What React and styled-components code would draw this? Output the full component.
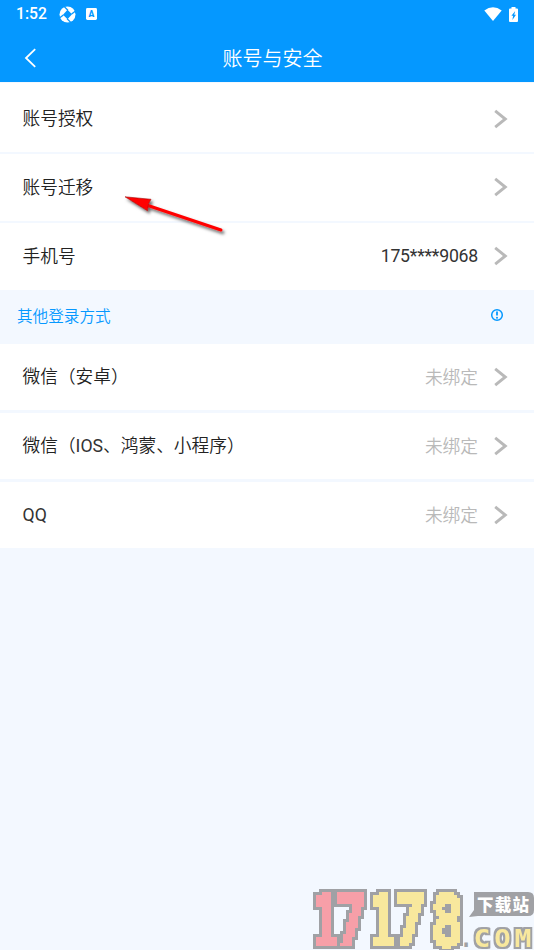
import React from 'react';
import styled, { createGlobalStyle } from 'styled-components';

const GlobalStyle = createGlobalStyle`
  * { box-sizing: border-box; }
  body { margin: 0; background: #f3f8ff; }
`;

const Screen = styled.main`
  position: relative;
  width: 534px;
  height: 950px;
  overflow: hidden;
  background: #f3f8ff;
  color: #222;
  font-family: Roboto, "Noto Sans CJK SC", sans-serif;
`;

const StatusBar = styled.div`
  display: flex;
  align-items: center;
  height: 28px;
  padding: 0 16px 0 16px;
  background: #0598ff;
  color: #fff;
`;

const Clock = styled.span`
  width: 43px;
  font-size: 15.7px;
  line-height: 28px;
  font-weight: 500;
`;

const StatusIcons = styled.div`
  display: flex;
  align-items: center;
  gap: ${(p) => p.$gap}px;
  margin-left: ${(p) => (p.$end ? 'auto' : '0')};
  height: ${(p) => (p.$end ? '26px' : '28px')};
`;

const Header = styled.header`
  display: grid;
  grid-template-columns: 60px 1fr 60px;
  align-items: center;
  height: 54px;
  padding-top: 6px;
  background: #0598ff;
  color: #fff;
  margin-bottom: 1px;
`;

const BackButton = styled.button`
  display: flex;
  padding: 0 0 0 24px;
  border: 0;
  background: none;
  color: inherit;
`;

const Title = styled.h1`
  margin: 0;
  padding: 1px 0 0 11px;
  text-align: center;
  font-size: 20px;
  line-height: 30px;
  font-weight: 350;
`;

const List = styled.section`
  display: grid;
  gap: 2.5px;
`;

const Row = styled.div`
  display: flex;
  align-items: center;
  height: ${(p) => p.$height || 66.5}px;
  padding: ${(p) => (p.$height ? '2.5px' : '0')} 26px 0 22.5px;
  background: #fff;
  font-size: 17.7px;
  line-height: 26px;
  font-weight: 350;
`;

const Label = styled.span`
  flex: 1;
  padding-top: ${(p) => (p.$latin ? 0 : 1.25)}px;
`;

const Latin = styled.span`
  color: #333;
  font-weight: 400;
`;

const Value = styled.span`
  margin-right: 16px;
  padding-top: 1.5px;
  color: ${(p) => (p.$muted ? '#b9b9b9' : '#333')};
`;

const Digits = styled(Value)`
  padding-top: 0;
  letter-spacing: -0.25px;
  font-weight: 400;
`;

const SectionHeader = styled.div`
  display: flex;
  align-items: center;
  justify-content: space-between;
  height: 54px;
  padding: 0 30px 3.5px 17px;
  color: #0598ff;
  font-size: 15.6px;
  font-weight: 350;
`;

const ArrowOverlay = styled.svg`
  position: absolute;
  left: 115px;
  top: 185px;
`;

const Watermark = styled.svg`
  position: absolute;
  left: 304px;
  top: 880px;
`;

const Chevron = () => (
  <svg width="14" height="20" viewBox="0 0 14 20" fill="none" stroke="#b9b9b9" strokeWidth="2.9">
    <path d="M1.2 1.9 11.3 10 1.2 18.1" strokeLinejoin="miter" />
  </svg>
);

const Item = ({ label, value, muted, height, latin }) => (
  <Row $height={height}>
    <Label $latin={latin}>{label}</Label>
    {value && (muted ? <Value $muted>{value}</Value> : <Digits>{value}</Digits>)}
    <Chevron />
  </Row>
);

const ShutterIcon = () => (
  <svg width="17" height="17" viewBox="0 0 17 17">
    <circle cx="8.5" cy="8.5" r="8" fill="#fff" />
    <path d="M8.5 3.8 13 8.3 8.5 13.2 4 8.7Z" fill="#0598ff" />
    <path d="M8.9 4.2 5 .4M12.6 8.1 16.6 5M8.1 12.8 12 16.6M4.4 8.9.4 12" stroke="#0598ff" strokeWidth="1.3" />
  </svg>
);

const KeyboardIcon = () => (
  <svg width="11" height="12" viewBox="0 0 11 12">
    <rect width="11" height="12" rx="1.4" fill="#fff" />
    <text x="5.5" y="9" textAnchor="middle" fontFamily="Roboto, sans-serif" fontSize="8.5" fontWeight="900" fill="#0598ff">A</text>
  </svg>
);

const WifiIcon = () => (
  <svg width="18" height="14" viewBox="0 0 18 14">
    <path d="M.3 3.5Q9-3 17.7 3.5L9 14Z" fill="#fff" />
  </svg>
);

const BatteryIcon = () => (
  <svg width="9" height="15" viewBox="0 0 9 15">
    <path d="M2.5 0h4v1.4H8q1 0 1 1V14q0 1-1 1H1q-1 0-1-1V2.4q0-1 1-1h1.5Z" fill="#fff" />
    <path d="M6.2 4 2.4 8.8h1.7L3.4 13 7 7.8H5.2Z" fill="#0598ff" />
  </svg>
);

const BackIcon = () => (
  <svg width="13" height="20" viewBox="0 0 13 20" fill="none" stroke="#fff" strokeWidth="1.8">
    <path d="M11.2 1.2 2 10l9.2 8.8" />
  </svg>
);

const InfoIcon = () => (
  <svg width="14" height="14" viewBox="0 0 14 14">
    <circle cx="7" cy="7" r="5.3" fill="none" stroke="#0598ff" strokeWidth="1.5" />
    <path d="M7 3.6v4" stroke="#0598ff" strokeWidth="1.8" />
    <circle cx="7" cy="9.7" r="1" fill="#0598ff" />
  </svg>
);

const PINK = '#f79fa8';
const YELLOW = '#f8e89d';
const GREY = '#a0a1a5';

const digits = [
  { text: '1', x: 10, width: 22, color: PINK },
  { text: '7', x: 33, width: 28, color: PINK },
  { text: '1', x: 68, width: 21, color: YELLOW },
  { text: '7', x: 91, width: 29, color: YELLOW },
  { text: '8', x: 128, width: 30, color: YELLOW },
];

const domain = [
  { text: '.', x: 160, width: 4 },
  { text: 'C', x: 171, width: 14 },
  { text: 'O', x: 191, width: 15 },
  { text: 'M', x: 211, width: 16 },
];

const glyphWidth = { 1: 0.50, 7: 0.53, 8: 0.56, '.': 0.19, C: 0.5, O: 0.55, M: 0.57 };

const LogoGlyph = ({ text, x, width, size, baseline, color }) => {
  const sx = width / (size * glyphWidth[text]);
  return (
    <text
      transform={`translate(${x + width / 2} ${baseline}) scale(${sx} 1)`}
      textAnchor="middle"
      fontFamily='"DejaVu Sans Mono", monospace'
      fontWeight="700"
      fontSize={size}
      fill={color}
    >
      {text}
    </text>
  );
};

/* Samples the lettering on a square grid and surrounds it with a blocky grey border. */
const PixelFilter = ({ id, cell, grow, border, color }) => (
  <filter id={id} filterUnits="userSpaceOnUse" x="0" y="0" width="230" height="70" colorInterpolationFilters="sRGB">
    <feMorphology in="SourceGraphic" operator="dilate" radius={grow} result="bold" />
    <feFlood x={(cell - 1) / 2} y={(cell - 1) / 2} width="1" height="1" floodColor="#000" />
    <feComposite x="0" y="0" width={cell} height={cell} in2="SourceGraphic" operator="over" result="dot" />
    <feFlood x="0" y="0" width={cell} height={cell} floodOpacity="0" result="blank" />
    <feMerge x="0" y="0" width={cell} height={cell} result="cell">
      <feMergeNode in="blank" />
      <feMergeNode in="dot" />
    </feMerge>
    <feTile in="cell" result="grid" />
    <feComposite in="bold" in2="grid" operator="in" />
    <feMorphology operator="dilate" radius={(cell - 1) / 2} />
    <feComponentTransfer result="mask">
      <feFuncA type="discrete" tableValues="0 1" />
    </feComponentTransfer>
    <feFlood floodColor={color} />
    <feComposite in2="mask" operator="in" result="face" />
    <feMorphology in="mask" operator="dilate" radius={border} result="wide" />
    <feFlood floodColor={GREY} />
    <feComposite in2="wide" operator="in" result="edge" />
    <feMerge>
      <feMergeNode in="edge" />
      <feMergeNode in="face" />
    </feMerge>
  </filter>
);

const BorderFilter = () => (
  <filter id="domainBorder" filterUnits="userSpaceOnUse" x="0" y="0" width="230" height="70" colorInterpolationFilters="sRGB">
    <feMorphology in="SourceAlpha" operator="dilate" radius="2" result="wide" />
    <feFlood floodColor={GREY} />
    <feComposite in2="wide" operator="in" result="edge" />
    <feMerge>
      <feMergeNode in="edge" />
      <feMergeNode in="SourceGraphic" />
    </feMerge>
  </filter>
);

const SiteLogo = () => (
  <Watermark width="230" height="70" viewBox="0 0 230 70">
    <defs>
      <PixelFilter id="pixelPink" cell={3} grow={1} border={3} color={PINK} />
      <PixelFilter id="pixelYellow" cell={3} grow={1} border={3} color={YELLOW} />
      <BorderFilter />
    </defs>
    {digits.map((d, i) => (
      <g key={i} filter={d.color === PINK ? 'url(#pixelPink)' : 'url(#pixelYellow)'}>
        <LogoGlyph {...d} size={72} baseline={66} />
      </g>
    ))}
    <path d="M170 12h54q6 0 6 6v12q0 6-6 6h-50l-9 1 5-7Z" fill={GREY} />
    <text x="173" y="31" textLength="52" fontFamily='"Noto Sans CJK SC", sans-serif' fontWeight="900" fontSize="16.5" fill="#fff">下载站</text>
    {domain.map((d) => (
      <g key={d.text} filter={d.text === '.' ? undefined : 'url(#domainBorder)'}>
        <LogoGlyph {...d} size={25} baseline={67} color={d.text === '.' ? GREY : YELLOW} />
      </g>
    ))}
  </Watermark>
);

const PointerArrow = () => (
  <ArrowOverlay width="120" height="60" viewBox="0 0 120 60">
    <defs>
      <filter id="shadow" x="-20%" y="-30%" width="150%" height="180%">
        <feDropShadow dx="2" dy="2.5" stdDeviation="1.8" floodColor="#000" floodOpacity=".6" />
      </filter>
    </defs>
    <g filter="url(#shadow)">
      <path d="M33 20.5 106 45" stroke="#f00" strokeWidth="3" strokeLinecap="round" />
      <path d="M10 11.8 36 14.3 33.5 19 32.5 25.8Z" fill="#f00" stroke="#a51515" strokeWidth=".6" />
    </g>
  </ArrowOverlay>
);

export default function App() {
  return (
    <>
      <GlobalStyle />
      <Screen>
        <StatusBar>
          <Clock>1:52</Clock>
          <StatusIcons $gap={10}>
            <ShutterIcon />
            <KeyboardIcon />
          </StatusIcons>
          <StatusIcons $gap={7} $end>
            <WifiIcon />
            <BatteryIcon />
          </StatusIcons>
        </StatusBar>
        <Header>
          <BackButton aria-label="返回"><BackIcon /></BackButton>
          <Title>账号与安全</Title>
        </Header>
        <List>
          <Item label="账号授权" height={68.5} />
          <Item label="账号迁移" />
          <Item label="手机号" value="175****9068" />
        </List>
        <SectionHeader>
          <span>其他登录方式</span>
          <InfoIcon />
        </SectionHeader>
        <List>
          <Item label="微信（安卓）" value="未绑定" muted />
          <Item label={<>微信（<Latin>IOS</Latin>、鸿蒙、小程序）</>} value="未绑定" muted />
          <Item label={<Latin>QQ</Latin>} value="未绑定" muted latin />
        </List>
        <PointerArrow />
        <SiteLogo />
      </Screen>
    </>
  );
}
